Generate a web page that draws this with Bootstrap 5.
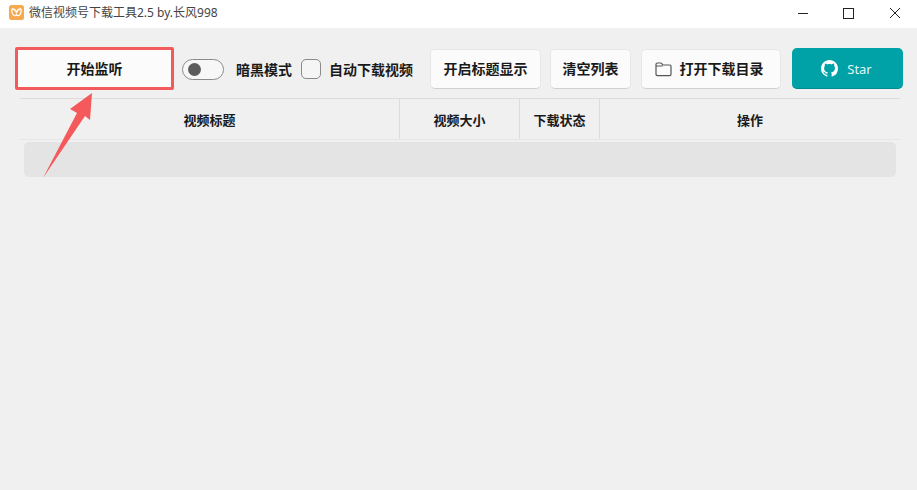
<!DOCTYPE html>
<html lang="zh">
<head>
  <meta charset="UTF-8" />
  <meta name="viewport" content="width=device-width, initial-scale=1" />
  <title>微信视频号下载工具</title>
  <link href="https://cdn.jsdelivr.net/npm/bootstrap@5.3.2/dist/css/bootstrap.min.css" rel="stylesheet" />
  <style>
    html, body {
      height: 100%;
    }
    body {
      background: #f0f0f0;
      font-family: "Liberation Sans", "Noto Sans CJK SC", sans-serif;
      font-size: 14px;
      color: #1a1a1a;
      overflow: hidden;
    }
    .app-window {
      position: relative;
      width: 917px;
      height: 490px;
    }
    .title-bar {
      height: 28px;
      background: #fff;
      padding: 0 0 3px 9px;
      font-family: "Noto Sans", "Noto Sans CJK SC", sans-serif;
      font-size: 12px;
      color: #444;
    }
    .app-logo {
      width: 15px;
      height: 15px;
      margin-right: 5px;
    }
    .win-btns {
      margin-left: auto;
      padding-right: 17px;
      gap: 33px;
    }
    .win-btns svg {
      width: 12px;
      height: 12px;
      display: block;
    }
    .tool-bar {
      height: 70px;
      padding: 19px 14px 0 15px;
    }
    .listen-frame {
      width: 159px;
      height: 43px;
      border: 3px solid #f25a5c;
      border-radius: 2px;
      margin-right: 8px;
      flex-shrink: 0;
    }
    .listen-btn {
      width: 100%;
      height: 100%;
      background: #fbfbfb;
      border: 0;
      border-radius: 0;
      font-size: 14px;
      font-weight: 700;
      color: #1a1a1a;
      padding: 1px 0 0;
    }
    .tool-opts {
      height: 44px;
    }
    .dark-switch {
      width: 42px;
      height: 21px;
      border: 1px solid #8a8a8a;
      border-radius: 11px;
      background: #f7f7f7;
      padding-left: 5px;
      margin-right: 12px;
      flex-shrink: 0;
    }
    .dark-switch span {
      width: 13px;
      height: 13px;
      border-radius: 50%;
      background: #5c5c5c;
    }
    .opt-text {
      font-weight: 700;
      white-space: nowrap;
      padding-top: 2px;
    }
    .auto-check {
      width: 20px;
      height: 20px;
      border: 1px solid #8a8a8a;
      border-radius: 5px;
      background: #f5f5f5;
      margin: 0 8px 0 9px;
      flex-shrink: 0;
    }
    .tool-btn {
      height: 40px;
      margin-top: 2px;
      background: #fbfbfb;
      border: 1px solid #e6e6e6;
      border-bottom-color: #cfcfcf;
      border-radius: 5px;
      font-size: 14px;
      font-weight: 700;
      color: #1a1a1a;
      padding: 0;
      white-space: nowrap;
    }
    .tool-btn:hover {
      background: #fbfbfb;
      color: #1a1a1a;
    }
    .btn-title { width: 111px; margin-left: 17px; }
    .btn-clear { width: 81px; margin-left: 9px; }
    .btn-open { width: 140px; margin-left: 10px; padding-right: 4px; }
    .btn-open svg {
      width: 17px;
      height: 15px;
      margin-right: 8px;
    }
    .star-btn {
      width: 111px;
      height: 41px;
      margin-left: 11px;
      margin-top: 1px;
      background: #00a2a8;
      border: 0;
      border-bottom: 1px solid #008d92;
      border-radius: 5px;
      color: #e4f5f5;
      font-family: "Noto Sans", sans-serif;
      font-size: 13px;
      padding: 1px 2px 0 0;
    }
    .star-btn:hover {
      background: #00a2a8;
      color: #e4f5f5;
    }
    .star-btn svg {
      width: 17px;
      height: 17px;
      margin-right: 9px;
    }
    .star-text {
      padding-top: 2px;
    }
    .list-head {
      margin: 0 17px 0 20px;
      height: 42px;
      border-top: 1px solid #dcdcdc;
      border-bottom: 1px solid #e6e6e6;
      font-size: 13px;
      font-weight: 700;
    }
    .list-head > div {
      border-right: 1px solid #dcdcdc;
      height: 100%;
      padding-top: 3px;
    }
    .list-head > div:last-child {
      border-right: 0;
    }
    .col-title { width: 380px; }
    .col-size { width: 120px; }
    .col-state { width: 80px; }
    .col-act { flex: 1; }
    .list-empty {
      height: 35px;
      margin: 2px 21px 0 24px;
      background: #e4e4e4;
      border-radius: 5px;
    }
    .red-arrow {
      position: absolute;
      left: 0;
      top: 0;
      width: 917px;
      height: 490px;
      pointer-events: none;
    }
  </style>
</head>
<body>
  <div class="app-window">

    <!-- title bar -->
    <div class="title-bar d-flex align-items-center">
      <svg class="app-logo" viewBox="0 0 15 15">
        <rect width="15" height="15" rx="2.500" fill="#f6a94e" />
        <path d="M3 4.200c1.600-.6 3.400.8 4.500 3.200 1.100-2.400 2.900-3.800 4.500-3.200.6 2.400-.4 6-2.600 6.400-.9.200-1.500-.4-1.900-1-.4.6-1 1.200-1.900 1C3.400 10.200 2.400 6.600 3 4.200z" fill="none" stroke="#fff" stroke-width="1.300" />
      </svg>
      <span>微信视频号下载工具2.5 by.长风998</span>
      <div class="win-btns d-flex align-items-center">
        <svg viewBox="0 0 12 12"><path d="M0 6.500h10" stroke="#222" stroke-width="1" /></svg>
        <svg viewBox="0 0 12 12"><rect x=".5" y="1.500" width="10" height="10" fill="none" stroke="#222" stroke-width="1" /></svg>
        <svg viewBox="0 0 12 12"><path d="M2 1l10 10M12 1L2 11" stroke="#222" stroke-width="1" /></svg>
      </div>
    </div>

    <!-- toolbar -->
    <div class="tool-bar d-flex align-items-start">
      <div class="listen-frame">
        <button type="button" class="btn listen-btn">开始监听</button>
      </div>
      <div class="tool-opts d-flex align-items-center">
        <div class="dark-switch d-flex align-items-center"><span></span></div>
        <span class="opt-text">暗黑模式</span>
        <div class="auto-check"></div>
        <span class="opt-text">自动下载视频</span>
      </div>
      <button type="button" class="btn tool-btn btn-title">开启标题显示</button>
      <button type="button" class="btn tool-btn btn-clear">清空列表</button>
      <button type="button" class="btn tool-btn btn-open">
        <svg viewBox="0 0 17 15"><path d="M1 3.500V2.500C1 1.600 1.600 1 2.500 1h3.200c.6 0 1 .3 1.300.8l.6 1.200h7c.8 0 1.400.6 1.400 1.400v7.800c0 .8-.6 1.400-1.400 1.400H2.400c-.8 0-1.400-.6-1.400-1.400zM1 4h6.500" fill="none" stroke="#555" stroke-width="1.200" /></svg>打开下载目录
      </button>
      <button type="button" class="btn star-btn d-flex align-items-center justify-content-center">
        <svg viewBox="0 0 16 16"><path fill="#fff" d="M8 0C3.580 0 0 3.580 0 8c0 3.540 2.290 6.530 5.470 7.590.4.070.55-.17.55-.38 0-.19-.01-.82-.01-1.490-2.010.37-2.530-.49-2.690-.94-.09-.23-.48-.94-.82-1.130-.28-.15-.68-.52-.01-.53.630-.01 1.080.58 1.230.82.720 1.210 1.870.87 2.330.66.070-.52.280-.87.510-1.070-1.780-.2-3.640-.89-3.640-3.950 0-.87.310-1.590.820-2.150-.08-.2-.36-1.020.08-2.120 0 0 .67-.21 2.200.82.640-.18 1.320-.27 2-.27s1.360.09 2 .27c1.530-1.040 2.200-.82 2.200-.82.440 1.100.16 1.920.08 2.120.51.560.82 1.270.82 2.150 0 3.070-1.870 3.750-3.650 3.950.29.250.54.730.54 1.480 0 1.070-.01 1.930-.01 2.200 0 .21.150.46.550.38A8.010 8.010 0 0 0 16 8c0-4.420-3.580-8-8-8z" /></svg><span class="star-text">Star</span>
      </button>
    </div>

    <!-- list header -->
    <div class="list-head d-flex">
      <div class="col-title d-flex align-items-center justify-content-center">视频标题</div>
      <div class="col-size d-flex align-items-center justify-content-center">视频大小</div>
      <div class="col-state d-flex align-items-center justify-content-center">下载状态</div>
      <div class="col-act d-flex align-items-center justify-content-center">操作</div>
    </div>
    <div class="list-empty"></div>

    <!-- annotation arrow -->
    <svg class="red-arrow" viewBox="0 0 917 490">
      <polygon points="43,178 77,113 70,109 92,93 90,120 85,116" fill="#f4595b" />
    </svg>
  </div>

  <script src="https://cdn.jsdelivr.net/npm/bootstrap@5.3.2/dist/js/bootstrap.bundle.min.js"></script>
</body>
</html>
